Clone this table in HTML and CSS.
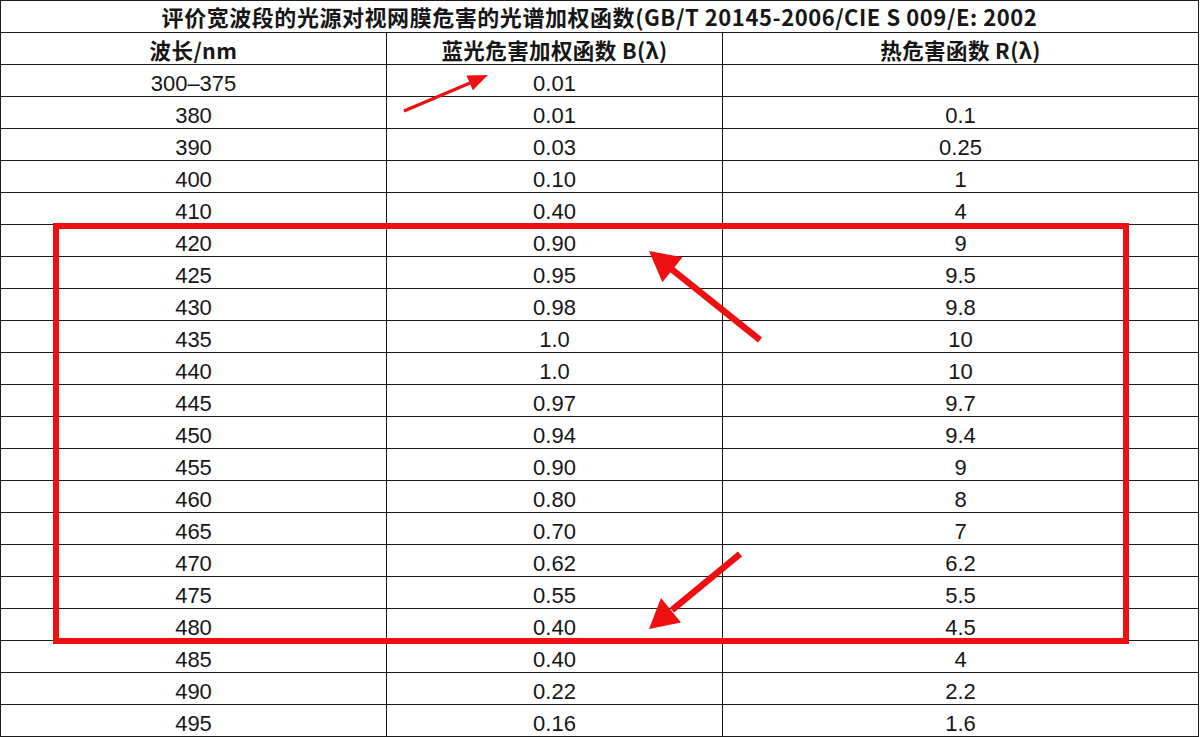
FILE: index.html
```html
<!DOCTYPE html>
<html lang="zh">
<head>
<meta charset="utf-8">
<title>光谱加权函数</title>
<link rel="stylesheet" href="styles.css">
</head>
<body>
<div class="page">
  <div class="grid">
    <div class="cell title">评价宽波段的光源对视网膜危害的光谱加权函数(GB/T 20145-2006/CIE S 009/E: 2002</div>
    <div class="cell head">波长/nm</div>
    <div class="cell head">蓝光危害加权函数 B(λ)</div>
    <div class="cell head">热危害函数 R(λ)</div>

    <div class="cell num">300–375</div><div class="cell num">0.01</div><div class="cell num"></div>
    <div class="cell num">380</div><div class="cell num">0.01</div><div class="cell num">0.1</div>
    <div class="cell num">390</div><div class="cell num">0.03</div><div class="cell num">0.25</div>
    <div class="cell num">400</div><div class="cell num">0.10</div><div class="cell num">1</div>
    <div class="cell num">410</div><div class="cell num">0.40</div><div class="cell num">4</div>
    <div class="cell num">420</div><div class="cell num">0.90</div><div class="cell num">9</div>
    <div class="cell num">425</div><div class="cell num">0.95</div><div class="cell num">9.5</div>
    <div class="cell num">430</div><div class="cell num">0.98</div><div class="cell num">9.8</div>
    <div class="cell num">435</div><div class="cell num">1.0</div><div class="cell num">10</div>
    <div class="cell num">440</div><div class="cell num">1.0</div><div class="cell num">10</div>
    <div class="cell num">445</div><div class="cell num">0.97</div><div class="cell num">9.7</div>
    <div class="cell num">450</div><div class="cell num">0.94</div><div class="cell num">9.4</div>
    <div class="cell num">455</div><div class="cell num">0.90</div><div class="cell num">9</div>
    <div class="cell num">460</div><div class="cell num">0.80</div><div class="cell num">8</div>
    <div class="cell num">465</div><div class="cell num">0.70</div><div class="cell num">7</div>
    <div class="cell num">470</div><div class="cell num">0.62</div><div class="cell num">6.2</div>
    <div class="cell num">475</div><div class="cell num">0.55</div><div class="cell num">5.5</div>
    <div class="cell num">480</div><div class="cell num">0.40</div><div class="cell num">4.5</div>
    <div class="cell num">485</div><div class="cell num">0.40</div><div class="cell num">4</div>
    <div class="cell num">490</div><div class="cell num">0.22</div><div class="cell num">2.2</div>
    <div class="cell num">495</div><div class="cell num">0.16</div><div class="cell num">1.6</div>
  </div>

  <svg class="marks" width="1200" height="737" viewBox="0 0 1200 737" aria-hidden="true">
    <rect x="56" y="226" width="1070" height="415" fill="none" stroke="#ee1010" stroke-width="6"/>
    <line x1="404" y1="111" x2="470" y2="83" stroke="#ee1010" stroke-width="3.5"/>
    <polygon points="488,75 466.5,75.5 472.8,90.2" fill="#ee1010"/>
    <line x1="760" y1="340" x2="672" y2="269.5" stroke="#ee1010" stroke-width="6.5"/>
    <polygon points="649,251 682.4,257.3 662.4,282.3" fill="#ee1010"/>
    <line x1="740" y1="554" x2="672" y2="610" stroke="#ee1010" stroke-width="6.5"/>
    <polygon points="649,629 681,622.5 661,598" fill="#ee1010"/>
  </svg>
</div>
</body>
</html>
```

FILE: styles.css
```css
html, body {
  margin: 0;
  padding: 0;
  background: #ffffff;
}

.page {
  position: relative;
  width: 1200px;
  height: 737px;
  overflow: hidden;
}

.grid {
  display: grid;
  grid-template-columns: 386px 336px 476px;
  grid-auto-rows: 32px;
  width: 1198px;
  border-left: 1px solid #1c1c1c;
  border-top: 1px solid #1c1c1c;
}

.cell {
  box-sizing: border-box;
  border-right: 1px solid #1c1c1c;
  border-bottom: 1px solid #1c1c1c;
  text-align: center;
  color: #161616;
  white-space: nowrap;
  overflow: hidden;
}

.title {
  grid-column: 1 / -1;
  font-family: "Noto Sans CJK SC", "Noto Sans", sans-serif;
  font-weight: 700;
  font-size: 22px;
  letter-spacing: 0.55px;
  line-height: 31px;
  padding-top: 0;
}

.head {
  font-family: "Noto Sans CJK SC", "Noto Sans", sans-serif;
  font-weight: 700;
  font-size: 21.5px;
  letter-spacing: 0.4px;
  line-height: 29px;
  padding-top: 2px;
}

.num {
  font-family: "Liberation Sans", Arial, sans-serif;
  font-size: 22px;
  line-height: 23px;
  padding-top: 7px;
}

.marks {
  position: absolute;
  left: 0;
  top: 0;
  pointer-events: none;
}
```
